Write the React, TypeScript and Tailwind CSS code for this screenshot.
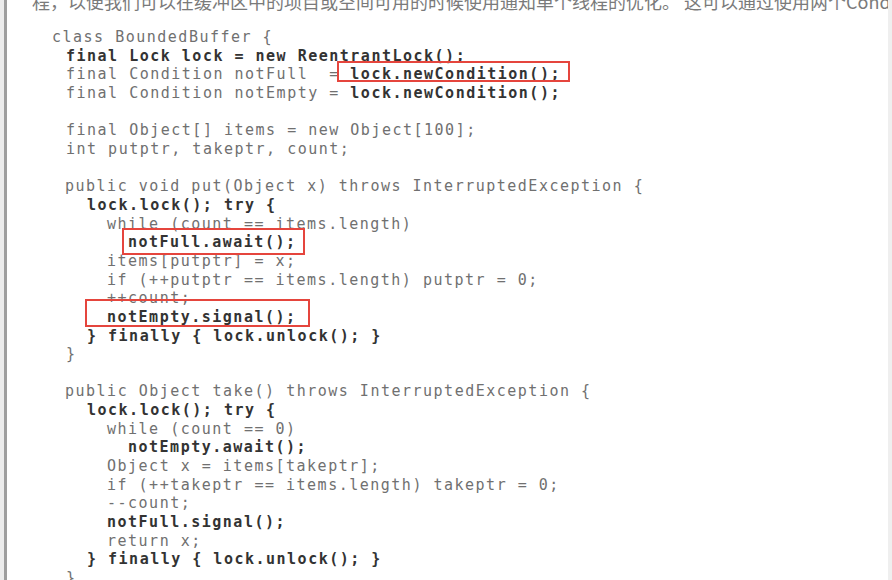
import React from "react";

type Seg = { t: string; b?: boolean };
type Line = { indent: string; segs: Seg[] };

const lines: Line[] = [
  { indent: "pl-0", segs: [{ t: "class BoundedBuffer {" }] },
  { indent: "pl-[14px]", segs: [{ t: "final Lock lock = new ReentrantLock();", b: true }] },
  { indent: "pl-[14px]", segs: [{ t: "final Condition notFull  = " }, { t: "lock.newCondition();", b: true }] },
  { indent: "pl-[14px]", segs: [{ t: "final Condition notEmpty = " }, { t: "lock.newCondition();", b: true }] },
  { indent: "pl-0", segs: [{ t: "" }] },
  { indent: "pl-[14px]", segs: [{ t: "final Object[] items = new Object[100];" }] },
  { indent: "pl-[14px]", segs: [{ t: "int putptr, takeptr, count;" }] },
  { indent: "pl-0", segs: [{ t: "" }] },
  { indent: "pl-[13px]", segs: [{ t: "public void put(Object x) throws InterruptedException {" }] },
  { indent: "pl-[35px]", segs: [{ t: "lock.lock(); try {", b: true }] },
  { indent: "pl-[55px]", segs: [{ t: "while (count == items.length)" }] },
  { indent: "pl-[76px]", segs: [{ t: "notFull.await();", b: true }] },
  { indent: "pl-[55px]", segs: [{ t: "items[putptr] = x;" }] },
  { indent: "pl-[55px]", segs: [{ t: "if (++putptr == items.length) putptr = 0;" }] },
  { indent: "pl-[55px]", segs: [{ t: "++count;" }] },
  { indent: "pl-[55px]", segs: [{ t: "notEmpty.signal();", b: true }] },
  { indent: "pl-[35px]", segs: [{ t: "} finally { lock.unlock(); }", b: true }] },
  { indent: "pl-[14px]", segs: [{ t: "}" }] },
  { indent: "pl-0", segs: [{ t: "" }] },
  { indent: "pl-[13px]", segs: [{ t: "public Object take() throws InterruptedException {" }] },
  { indent: "pl-[35px]", segs: [{ t: "lock.lock(); try {", b: true }] },
  { indent: "pl-[55px]", segs: [{ t: "while (count == 0)" }] },
  { indent: "pl-[76px]", segs: [{ t: "notEmpty.await();", b: true }] },
  { indent: "pl-[55px]", segs: [{ t: "Object x = items[takeptr];" }] },
  { indent: "pl-[55px]", segs: [{ t: "if (++takeptr == items.length) takeptr = 0;" }] },
  { indent: "pl-[55px]", segs: [{ t: "--count;" }] },
  { indent: "pl-[55px]", segs: [{ t: "notFull.signal();", b: true }] },
  { indent: "pl-[55px]", segs: [{ t: "return x;" }] },
  { indent: "pl-[35px]", segs: [{ t: "} finally { lock.unlock(); }", b: true }] },
  { indent: "pl-[14px]", segs: [{ t: "}" }] },
];

const App = () => {
  return (
    <div className="w-[892px] h-[580px] overflow-hidden bg-white flex">
      <div className="w-[4px] shrink-0 bg-[#ececec]" />
      <div className="w-[3px] shrink-0 bg-[#9e9e9e]" />
      <div className="relative flex-1 min-w-0 overflow-hidden flex flex-col">
        <p className="mt-[-9px] pl-[25px] h-[20px] whitespace-nowrap text-[18px] leading-[20px] text-[#7a7a7a] font-['Noto_Sans_CJK_SC',sans-serif]">
          程，以便我们可以在缓冲区中的项目或空间可用的时候使用通知单个线程的优化。 这可以通过使用两个Condition实例来实现。
        </p>
        <div className="mt-[17px] pl-[45px] font-['DejaVu_Sans_Mono',monospace] text-[15px] leading-[18.66px] tracking-[1.5px] whitespace-pre text-[#707070]">
          {lines.map((line, i) => (
            <div key={i} className={`${line.indent} h-[18.66px]`}>
              {line.segs.map((s, j) => (
                <span key={j} className={s.b ? "font-bold text-[#333333]" : ""}>
                  {s.t}
                </span>
              ))}
            </div>
          ))}
        </div>

        {/* red highlight boxes */}
        <div className="absolute left-[330px] top-[61px] w-[233px] h-[21px] border-2 border-[#e5453d]" />
        <div className="absolute left-[115px] top-[228px] w-[183px] h-[27px] border-2 border-[#e5453d]" />
        <div className="absolute left-[78px] top-[299px] w-[225px] h-[28px] border-2 border-[#e5453d]" />
      </div>
      <div className="w-[4px] shrink-0 bg-[#efefef]" />
    </div>
  );
};

export default App;
